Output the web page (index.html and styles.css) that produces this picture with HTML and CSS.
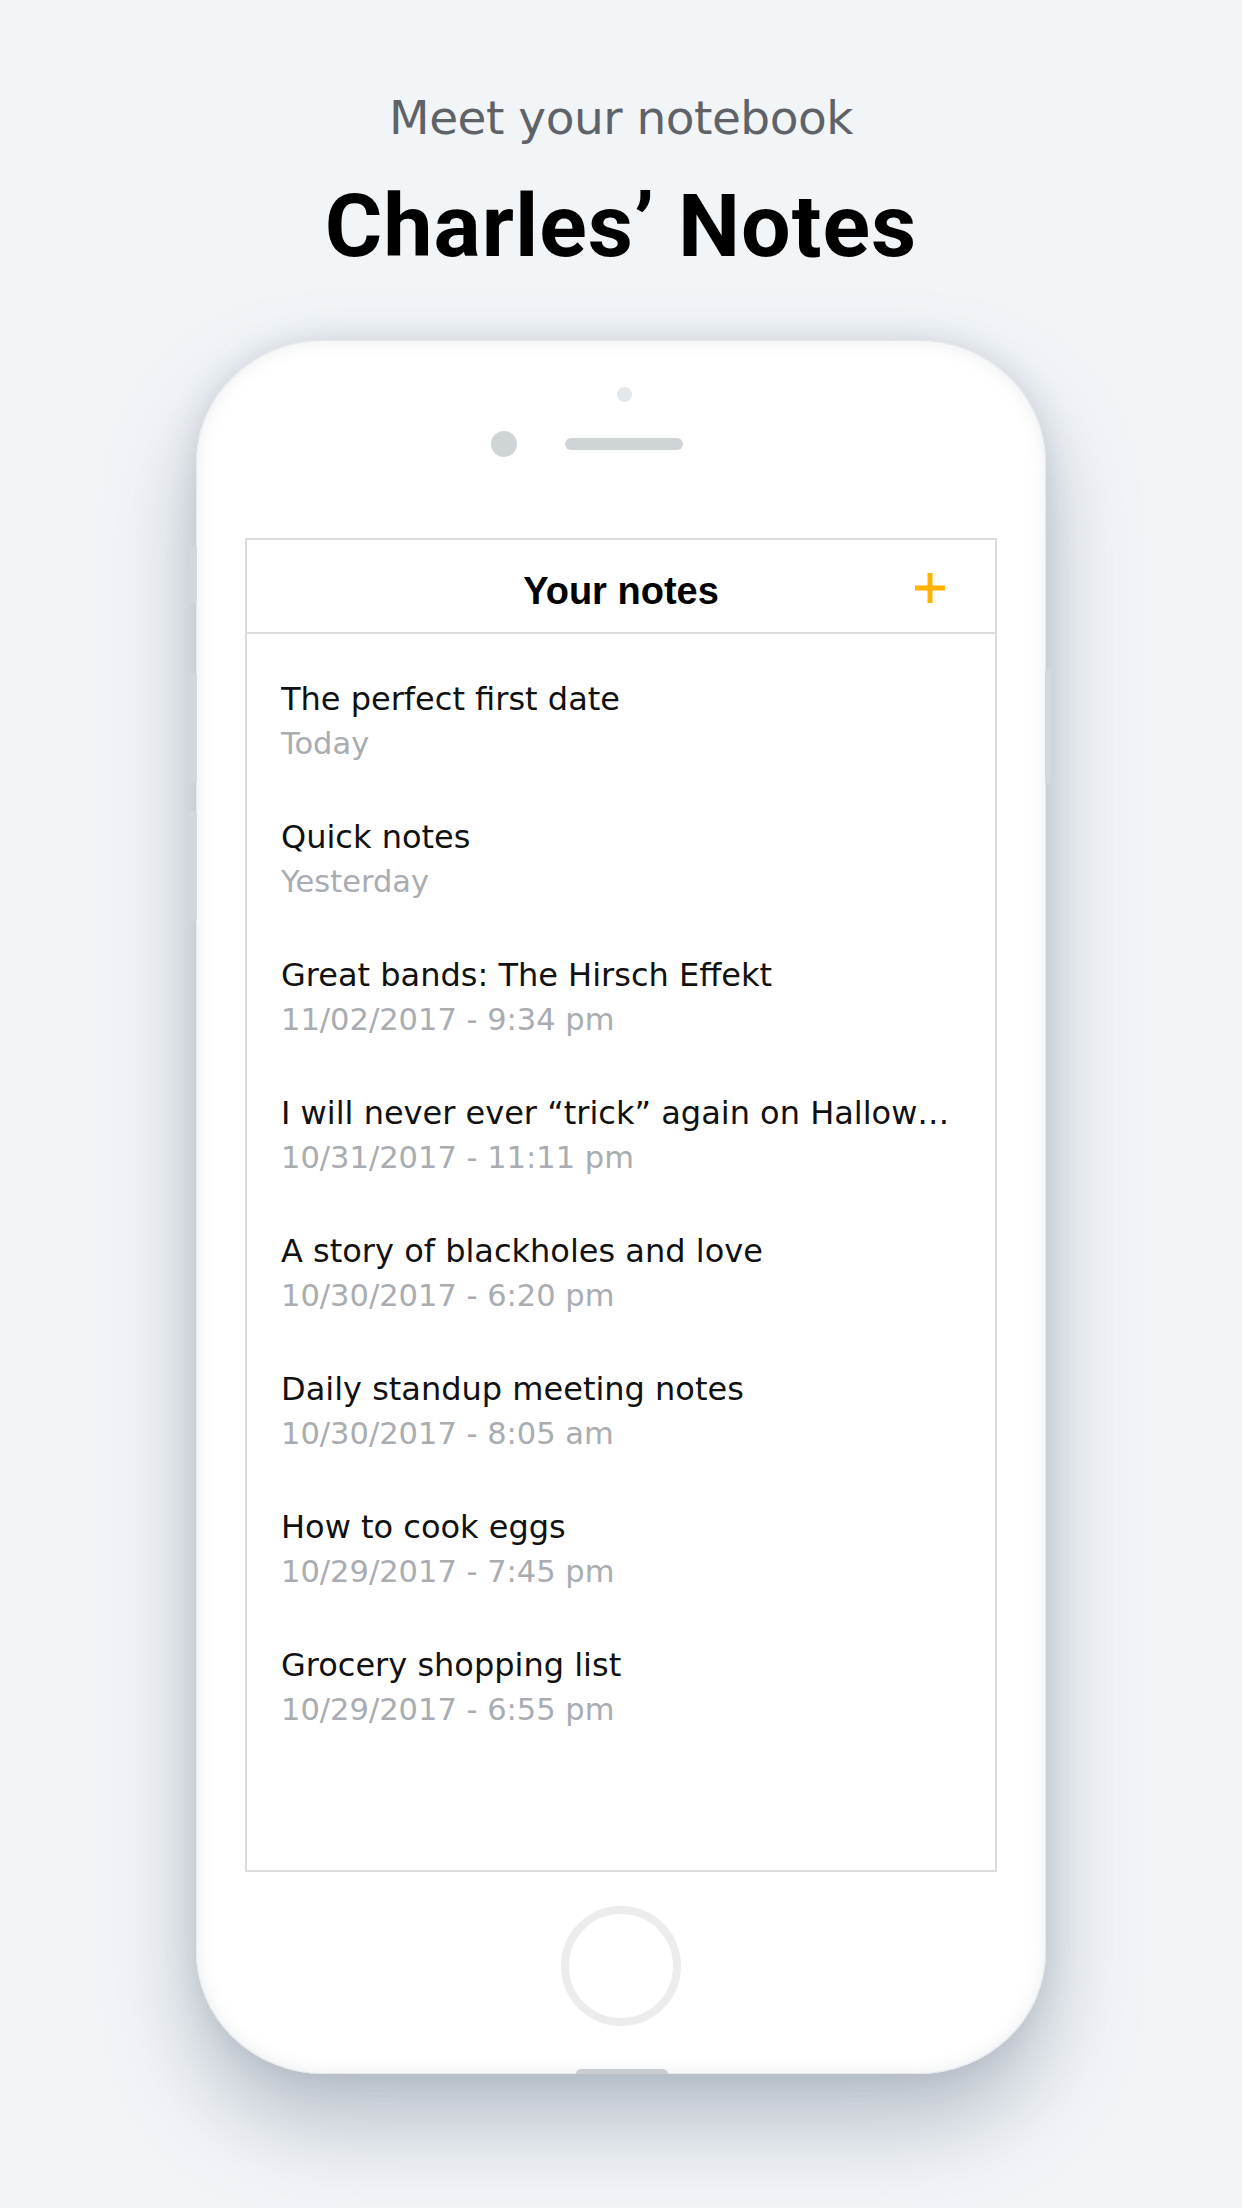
FILE: index.html
```html
<!DOCTYPE html>
<html lang="en">
<head>
<meta charset="utf-8">
<title>Charles’ Notes</title>
<link rel="stylesheet" href="styles.css">
</head>
<body>
<main class="page">
  <p class="kicker">Meet your notebook</p>
  <h1 class="headline">Charles’ Notes</h1>

  <div class="phone">
    <span class="side-btn side-btn--mute"></span>
    <span class="side-btn side-btn--vol-up"></span>
    <span class="side-btn side-btn--vol-down"></span>
    <span class="side-btn side-btn--power"></span>

    <div class="sensor"></div>
    <div class="earpiece-row">
      <span class="camera"></span>
      <span class="speaker"></span>
      <span></span>
    </div>

    <section class="screen">
      <header class="nav">
        <span></span>
        <h2 class="nav-title">Your notes</h2>
        <button class="add-btn" aria-label="Add note">
          <svg viewBox="0 0 32 32" width="32" height="32"><path d="M16 1V31M1 16H31" stroke="#ffb200" stroke-width="5" fill="none"/></svg>
        </button>
      </header>
      <ul class="notes">
        <li class="note"><span class="note-title">The perfect first date</span><span class="note-date">Today</span></li>
        <li class="note"><span class="note-title">Quick notes</span><span class="note-date">Yesterday</span></li>
        <li class="note"><span class="note-title">Great bands: The Hirsch Effekt</span><span class="note-date">11/02/2017 - 9:34 pm</span></li>
        <li class="note"><span class="note-title">I will never ever “trick” again on Hallow…</span><span class="note-date">10/31/2017 - 11:11 pm</span></li>
        <li class="note"><span class="note-title">A story of blackholes and love</span><span class="note-date">10/30/2017 - 6:20 pm</span></li>
        <li class="note"><span class="note-title">Daily standup meeting notes</span><span class="note-date">10/30/2017 - 8:05 am</span></li>
        <li class="note"><span class="note-title">How to cook eggs</span><span class="note-date">10/29/2017 - 7:45 pm</span></li>
        <li class="note"><span class="note-title">Grocery shopping list</span><span class="note-date">10/29/2017 - 6:55 pm</span></li>
      </ul>
    </section>

    <div class="home-btn"></div>
    <span class="port"></span>
  </div>
</main>
</body>
</html>
```

FILE: styles.css
```css
* { box-sizing: border-box; }

html, body {
  margin: 0;
  padding: 0;
  background: #f2f5f8;
}

.page {
  width: 1242px;
  height: 2208px;
  overflow: hidden;
  display: flex;
  flex-direction: column;
  align-items: center;
  padding-top: 89px;
}

.kicker {
  margin: 0;
  font-family: "DejaVu Sans", sans-serif;
  font-size: 47px;
  letter-spacing: -0.5px;
  line-height: 57px;
  color: #5f6368;
}

.headline {
  margin: 30px 0 0;
  font-family: Roboto, "Liberation Sans", sans-serif;
  font-weight: 700;
  font-size: 88px;
  letter-spacing: 1px;
  line-height: 100px;
  color: #000;
}

.phone {
  position: relative;
  margin-top: 64px;
  width: 850px;
  height: 1734px;
  background: #fff;
  border-radius: 128px / 122px;
  box-shadow:
    inset 0 0 0 1px #e6e9ec,
    inset 0 0 18px rgba(120, 130, 140, 0.16),
    0 0 28px rgba(140, 150, 164, 0.28),
    0 48px 90px rgba(100, 112, 130, 0.42);
  display: flex;
  flex-direction: column;
  align-items: center;
}

.side-btn {
  position: absolute;
  width: 7px;
  background: #d3d8dc;
  border-radius: 3px;
}
.side-btn--mute { left: -6px; top: 206px; height: 57px; }
.side-btn--vol-up { left: -6px; top: 333px; height: 110px; }
.side-btn--vol-down { left: -6px; top: 471px; height: 110px; }
.side-btn--power { right: -6px; top: 329px; height: 115px; }

.sensor {
  margin-top: 47px;
  margin-left: 6px;
  width: 15px;
  height: 15px;
  border-radius: 50%;
  background: #e4e8ea;
}

.earpiece-row {
  margin-top: 29px;
  width: 100%;
  display: grid;
  grid-template-columns: 1fr auto 1fr;
  align-items: center;
  padding-left: 6px;
}

.camera {
  justify-self: end;
  margin-right: 48px;
  width: 26px;
  height: 26px;
  border-radius: 50%;
  background: #cfd4d7;
}

.speaker {
  width: 118px;
  height: 12px;
  border-radius: 6px;
  background: #cfd4d7;
}

.screen {
  margin-top: 81px;
  width: 752px;
  height: 1334px;
  border: 2px solid #d8dcdf;
  background: #fff;
  overflow: hidden;
  display: flex;
  flex-direction: column;
}

.nav {
  height: 94px;
  padding-top: 10px;
  border-bottom: 2px solid #d8dcdf;
  display: grid;
  grid-template-columns: 1fr auto 1fr;
  align-items: center;
}

.nav-title {
  margin: 0;
  font-family: "Liberation Sans", Arial, sans-serif;
  font-weight: 700;
  font-size: 38px;
  line-height: 1;
  color: #000;
}

.add-btn {
  justify-self: end;
  margin: 0 49px 6px 0;
  padding: 0;
  border: 0;
  background: none;
  width: 32px;
  height: 32px;
  display: flex;
}

.notes {
  list-style: none;
  margin: 0;
  padding: 19px 0 0;
}

.note {
  padding: 26px 38px 25px 34px;
  display: flex;
  flex-direction: column;
  font-family: "DejaVu Sans", sans-serif;
}

.note-title {
  font-size: 32px;
  line-height: 40px;
  color: #111;
  white-space: nowrap;
  overflow: hidden;
}

.note-date {
  margin-top: 3px;
  font-size: 30.5px;
  line-height: 44px;
  color: #a9acb0;
}

.home-btn {
  margin-top: 34px;
  width: 120px;
  height: 120px;
  border-radius: 50%;
  border: 8px solid #ececec;
}

.port {
  position: absolute;
  bottom: 0;
  left: 380px;
  width: 92px;
  height: 5px;
  border-radius: 5px 5px 0 0;
  background: #c9cdd1;
}
```
